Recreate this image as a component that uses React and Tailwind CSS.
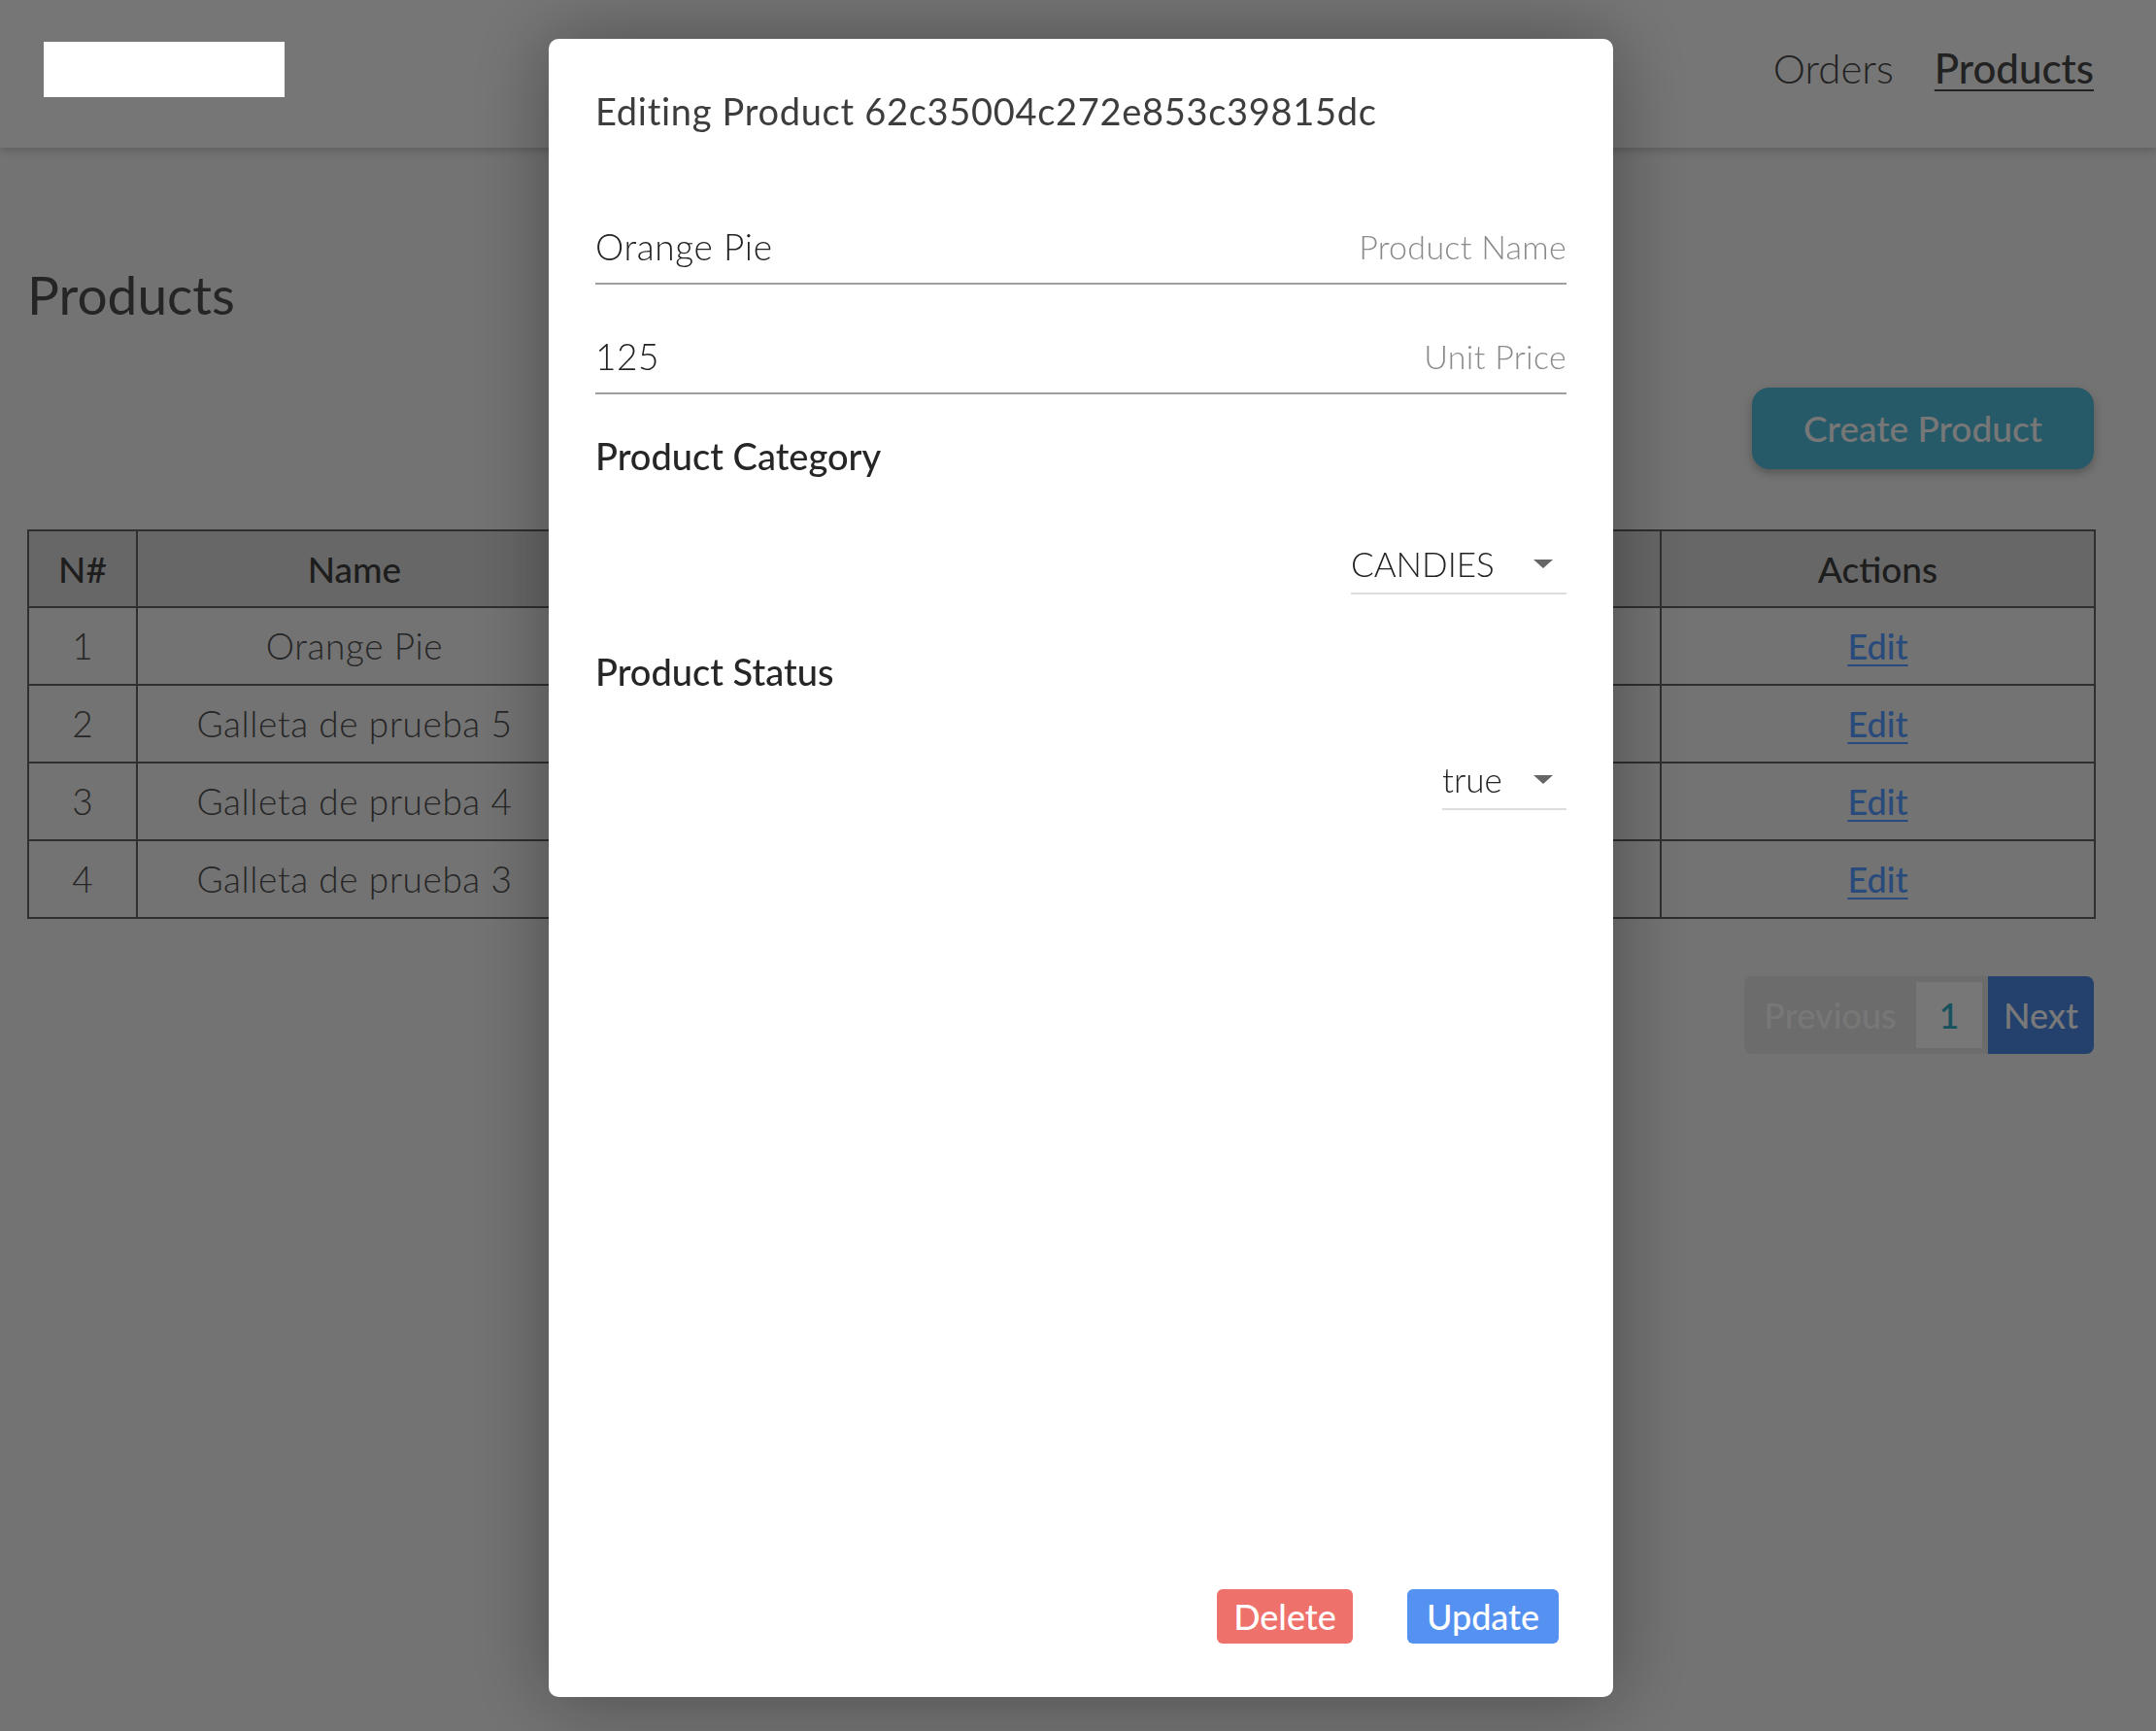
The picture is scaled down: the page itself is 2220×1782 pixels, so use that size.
import { useState } from 'react';

const products = [
  { id: 1, name: 'Orange Pie', price: 125, category: 'CANDIES', status: 'true' },
  { id: 2, name: 'Galleta de prueba 5', price: 30, category: 'COOKIES', status: 'true' },
  { id: 3, name: 'Galleta de prueba 4', price: 30, category: 'COOKIES', status: 'true' },
  { id: 4, name: 'Galleta de prueba 3', price: 30, category: 'COOKIES', status: 'true' },
];

function Caret() {
  return (
    <svg width="20" height="9" viewBox="0 0 20 9" className="shrink-0">
      <polygon points="0,0 20,0 10,9" fill="#666666" />
    </svg>
  );
}

function TextField({ value, label, className }) {
  return (
    <label className={`flex h-[77px] items-center justify-between border-b-2 border-[#9e9e9e] ${className}`}>
      <span className="text-[37px] font-light tracking-[0.6px] text-[#222222]">{value}</span>
      <span className="text-[34px] font-light tracking-[0.3px] text-[#8a8a8a]">{label}</span>
    </label>
  );
}

function SelectField({ value, width }) {
  return (
    <div className="flex justify-end">
      <div className={`flex h-[55px] items-center justify-between border-b-2 border-[#dddddd] pb-[7px] pr-[14px] ${width}`}>
        <span className="text-[35px] font-light text-[#222222]">{value}</span>
        <Caret />
      </div>
    </div>
  );
}

function EditModal({ product }) {
  return (
    <div className="fixed left-[565px] top-[40px] z-50 flex h-[1707px] w-[1096px] flex-col rounded-[10px] bg-white px-[48px] pt-[50px] pb-[55px] shadow-[0_0_80px_rgba(0,0,0,0.35)]">
      <h2 className="h-[48px] text-[38px] leading-[48px] tracking-[0.7px] text-[#3d3d3d]">
        Editing Product 62c35004c272e853c39815dc
      </h2>

      <form className="mt-[78px] flex flex-1 flex-col">
        <TextField value={product.name} label="Product Name" />
        <TextField value={product.price} label="Unit Price" className="mt-[36px]" />

        <h3 className="mt-[39px] h-[48px] text-[38px] font-medium leading-[48px] text-[#262626]">Product Category</h3>
        <div className="mt-[64px]">
          <SelectField value={product.category} width="w-[222px]" />
        </div>

        <h3 className="mt-[55px] h-[48px] text-[38px] font-medium leading-[48px] text-[#262626]">Product Status</h3>
        <div className="mt-[64px]">
          <SelectField value={product.status} width="w-[128px]" />
        </div>

        <div className="mt-auto flex justify-end gap-[56px] pr-[8px]">
          <button type="button" className="h-[56px] w-[140px] rounded-[6px] bg-[#ee716b] text-[36px] font-medium text-white">
            Delete
          </button>
          <button type="button" className="h-[56px] w-[156px] rounded-[6px] bg-[#5591f0] text-[36px] font-medium text-white">
            Update
          </button>
        </div>
      </form>
    </div>
  );
}

export default function App() {
  const [editing] = useState(products[0]);

  return (
    <div className="min-h-[1782px] bg-[#e6e6e6] font-['Lato','Noto_Sans',sans-serif] text-[#444444]">
      {/* Barra superior */}
      <header className="flex h-[152px] items-start justify-between bg-[#ececec] pl-[45px] pr-[64px] shadow-[0_3px_8px_rgba(0,0,0,0.18)]">
        <div className="relative z-50 mt-[43px] h-[57px] w-[248px] bg-white" />
        <nav className="mt-[46px] flex gap-[42px] text-[42px] leading-[48px] text-[#444444]">
          <a href="#" className="font-light">Orders</a>
          <a href="#" className="font-medium underline decoration-2 underline-offset-[6px]">Products</a>
        </nav>
      </header>

      <main className="pl-[28px] pr-[64px]">
        <h1 className="mt-[120px] h-[63px] text-[55px] leading-[63px] text-[#4a4a4a]">Products</h1>

        <div className="mt-[64px] flex justify-end">
          <button className="h-[84px] w-[352px] rounded-[18px] bg-[#4eb4d0] text-[37px] font-medium text-[#eeeeee] shadow-[0_4px_10px_rgba(0,0,0,0.25)]">
            Create Product
          </button>
        </div>

        <table className="mt-[62px] w-full table-fixed border-collapse border-2 border-[#5e5e5e] text-center text-[37px]">
          <colgroup>
            <col className="w-[112px]" />
            <col className="w-[448px]" />
            <col className="w-[340px]" />
            <col className="w-[400px]" />
            <col className="w-[381px]" />
            <col className="w-[447px]" />
          </colgroup>
          <thead className="bg-[#cecece]">
            <tr className="h-[79px]">
              <th className="border-2 border-[#5e5e5e] font-medium text-[#3a3a3a]">N#</th>
              <th className="border-2 border-[#5e5e5e] font-medium text-[#3a3a3a]">Name</th>
              <th className="border-2 border-[#5e5e5e] font-medium text-[#3a3a3a]">Unit Price</th>
              <th className="border-2 border-[#5e5e5e] font-medium text-[#3a3a3a]">Category</th>
              <th className="border-2 border-[#5e5e5e] font-medium text-[#3a3a3a]">Status</th>
              <th className="border-2 border-[#5e5e5e] font-medium text-[#3a3a3a]">Actions</th>
            </tr>
          </thead>
          <tbody>
            {products.map((p, i) => (
              <tr key={p.id} className="h-[80px]">
                <td className="border-2 border-[#5e5e5e] font-light text-[#4c4c4c]">{i + 1}</td>
                <td className="border-2 border-[#5e5e5e] font-light tracking-[0.6px] text-[#4c4c4c]">{p.name}</td>
                <td className="border-2 border-[#5e5e5e] font-light text-[#4c4c4c]">{p.price}</td>
                <td className="border-2 border-[#5e5e5e] font-light text-[#4c4c4c]">{p.category}</td>
                <td className="border-2 border-[#5e5e5e] font-light text-[#4c4c4c]">{p.status}</td>
                <td className="border-2 border-[#5e5e5e]">
                  <a href="#" className="text-[36px] font-medium text-[#5096f8] underline decoration-2 underline-offset-[5px]">Edit</a>
                </td>
              </tr>
            ))}
          </tbody>
        </table>

        {/* Paginación */}
        <div className="mt-[59px] flex justify-end">
          <div className="flex h-[80px] w-[360px] items-stretch overflow-hidden rounded-[8px] bg-[#d8d8d8] text-[36px] font-medium">
            <button className="w-[177px] text-[#efefef]">Previous</button>
            <div className="my-[6px] flex w-[68px] items-center justify-center bg-[#eeeeee] text-[#2aa4bc]">1</div>
            <button className="ml-[6px] flex-1 bg-[#4682d8] text-[#f2f2f2]">Next</button>
          </div>
        </div>
      </main>

      {/* Fondo del modal */}
      <div className="fixed inset-0 z-40 bg-black/50" />
      <EditModal product={editing} />
    </div>
  );
}
